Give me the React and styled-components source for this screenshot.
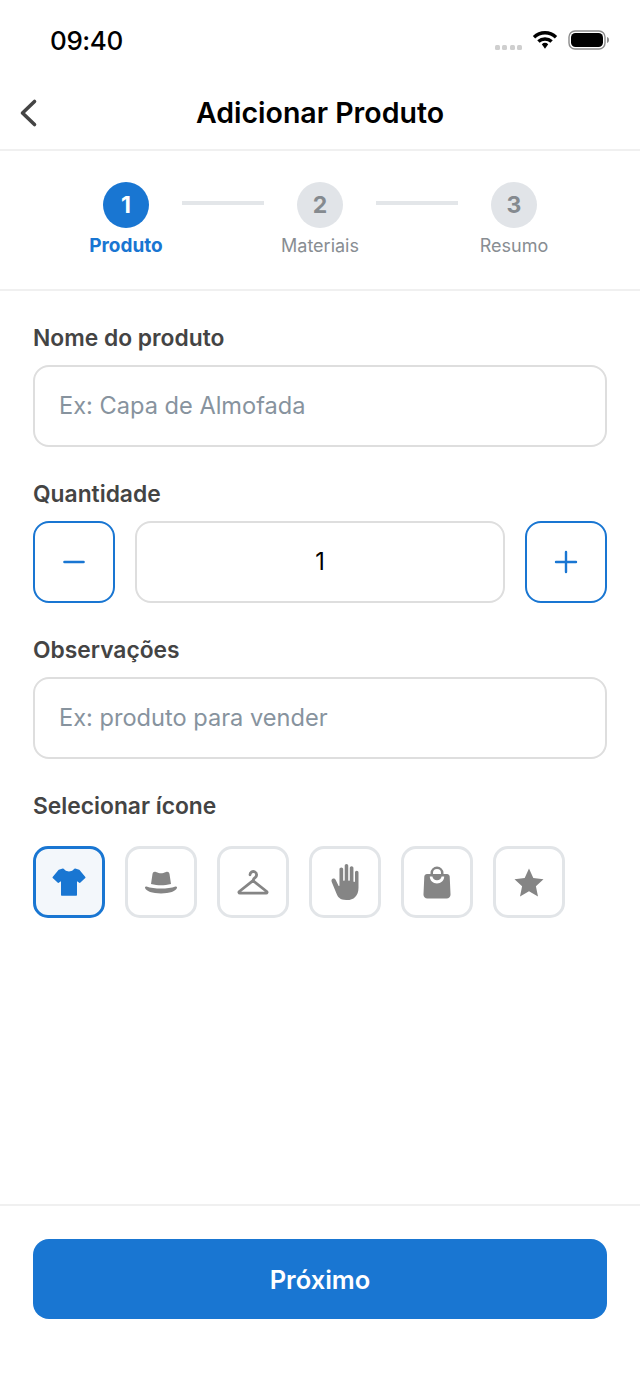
import React from "react";
import styled, { createGlobalStyle } from "styled-components";
import { IoHandRight } from "react-icons/io5";

const Global = createGlobalStyle`
  * { box-sizing: border-box; }
  html, body { margin: 0; padding: 0; background: #fff; }
  body { font-family: Inter, "Noto Sans", sans-serif; }
`;

const Page = styled.div`
  width: 640px;
  height: 1385px;
  background: #fff;
  display: flex;
  flex-direction: column;
  overflow: hidden;
`;

const StatusBar = styled.div`
  height: 76px;
  flex: none;
  padding: 23px 30px 0 50px;
  display: flex;
  justify-content: space-between;
  align-items: flex-start;
`;

const Time = styled.span`
  font-size: 26px;
  line-height: 36px;
  font-weight: 500;
  letter-spacing: -0.4px;
  color: #000;
`;

const StatusIcons = styled.div`
  display: flex;
  align-items: center;
  gap: 10px;
  padding-top: 7px;
`;

const Dots = styled.div`
  display: flex;
  gap: 2.5px;
  padding-top: 15px;
`;

const Dot = styled.i`
  display: block;
  width: 5px;
  height: 5px;
  border-radius: 1.5px;
  background: #cfcfcf;
`;

const Header = styled.header`
  height: 75px;
  flex: none;
  display: flex;
  align-items: center;
  justify-content: center;
  position: relative;
  border-bottom: 2px solid #f0f0f0;
`;

const BackButton = styled.button`
  position: absolute;
  left: 16px;
  top: 20px;
  width: 26px;
  height: 34px;
  padding: 0;
  border: 0;
  background: none;
  display: flex;
  align-items: center;
  justify-content: center;
`;

const Title = styled.h1`
  margin: 0;
  font-size: 28.5px;
  line-height: 36px;
  font-weight: 600;
  color: #000;
`;

const Stepper = styled.nav`
  height: 140px;
  flex: none;
  padding-top: 31px;
  display: flex;
  justify-content: center;
  align-items: flex-start;
  border-bottom: 2px solid #f0f0f0;
`;

const Step = styled.div`
  width: 88px;
  display: flex;
  flex-direction: column;
  align-items: center;
  gap: 6px;
`;

const StepCircle = styled.div`
  width: 46px;
  height: 46px;
  border-radius: 50%;
  background: ${(p) => (p.$active ? "#1976d2" : "#e1e4e8")};
  color: ${(p) => (p.$active ? "#fff" : "#858a8f")};
  font-size: 23px;
  font-weight: 700;
  display: flex;
  align-items: center;
  justify-content: center;
`;

const StepLabel = styled.span`
  font-size: ${(p) => (p.$active ? "19px" : "18px")};
  line-height: 24px;
  white-space: nowrap;
  font-weight: ${(p) => (p.$active ? 700 : 400)};
  color: ${(p) => (p.$active ? "#1976d2" : "#888d92")};
`;

const StepLine = styled.div`
  width: 82px;
  height: 4px;
  margin: 19px 12px 0;
  background: #e3e6e9;
`;

const Form = styled.main`
  flex: 1;
  padding: 33px 33px 0;
  display: flex;
  flex-direction: column;
  gap: 33.5px;
`;

const Field = styled.section`
  display: flex;
  flex-direction: column;
  gap: 13px;
`;

const Label = styled.label`
  font-size: 22.8px;
  line-height: 28px;
  font-weight: 600;
  color: #444;
`;

const TextInput = styled.input`
  width: 100%;
  height: 81.5px;
  border: 2px solid #dedede;
  border-radius: 16px;
  padding: 0 24px;
  background: #fff;
  font-family: inherit;
  font-size: 23.6px;
  color: #000;
  outline: none;
  &::placeholder { color: #87939e; opacity: 1; }
`;

const QuantityRow = styled.div`
  display: flex;
  gap: 20px;
`;

const StepButton = styled.button`
  width: 82px;
  height: 81.5px;
  flex: none;
  padding: 0;
  border: 2px solid #1976d2;
  border-radius: 16px;
  background: #fff;
  display: flex;
  align-items: center;
  justify-content: center;
`;

const QuantityValue = styled(TextInput)`
  flex: 1;
  min-width: 0;
  text-align: center;
  padding: 0;
`;

const IconGrid = styled.div`
  display: flex;
  gap: 20px;
  margin-top: 13px;
`;

const IconChoice = styled.button`
  width: 72px;
  height: 72px;
  padding: 0;
  border: 3px solid ${(p) => (p.$active ? "#1976d2" : "#e2e5e8")};
  border-radius: 15px;
  background: ${(p) => (p.$active ? "#f3f7fb" : "#fff")};
  color: ${(p) => (p.$active ? "#1976d2" : "#858585")};
  display: flex;
  align-items: center;
  justify-content: center;
`;

const Footer = styled.footer`
  flex: none;
  height: 181px;
  padding: 33px 33px 0;
  border-top: 2px solid #f0f0f0;
`;

const NextButton = styled.button`
  width: 100%;
  height: 80px;
  border: 0;
  border-radius: 16px;
  background: #1976d2;
  color: #fff;
  font-family: inherit;
  font-size: 25.5px;
  font-weight: 600;
`;

const Wifi = () => (
  <svg width="26" height="20" viewBox="0 0 26 20" fill="none" stroke="#000" strokeWidth="3.4">
    <path d="M2 7.2a16 16 0 0 1 22 0" />
    <path d="M6.4 11.6a9.6 9.6 0 0 1 13.2 0" />
    <path d="M9.8 14.2l3.2 4.6 3.2-4.6a5 5 0 0 0-6.4 0z" fill="#000" stroke="none" />
  </svg>
);

const Battery = () => (
  <svg width="42" height="20" viewBox="0 0 42 20">
    <rect x="1" y="1" width="36" height="18" rx="6" fill="none" stroke="#8c8c8c" strokeWidth="1.4" />
    <rect x="3" y="3" width="32" height="14" rx="4.5" fill="#000" />
    <path d="M39 7c1.5.4 2 1.6 2 3s-.5 2.6-2 3z" fill="#8c8c8c" />
  </svg>
);

const Chevron = () => (
  <svg width="20" height="30" viewBox="0 0 20 30" fill="none" stroke="#444" strokeWidth="3.6" strokeLinecap="round" strokeLinejoin="round">
    <path d="M15.5 3.5L3.5 15l12 11.5" />
  </svg>
);

const Minus = () => (
  <svg width="24" height="24" viewBox="0 0 24 24" stroke="#1976d2" strokeWidth="2.6" strokeLinecap="round">
    <path d="M2.5 12h19" />
  </svg>
);

const Plus = () => (
  <svg width="24" height="24" viewBox="0 0 24 24" stroke="#1976d2" strokeWidth="2.4" strokeLinecap="round">
    <path d="M2 12h20M12 2v20" />
  </svg>
);

const Shirt = () => (
  <svg width="34" height="30" viewBox="0 0 34 30" fill="currentColor" stroke="currentColor" strokeWidth="1.4" strokeLinejoin="round">
    <path d="M11 2.2c1.2 1.7 3 2.9 6 2.900s4.800-1.200 6-2.900l4 1.300 5.800 7L27.700 15.300l-3.400-2.400v15.200H9.700V12.900l-3.400 2.400-5.100-4.800 5.800-7z" />
  </svg>
);

const Hat = () => (
  <svg width="32" height="23" viewBox="0 0 32 23" fill="currentColor">
    <path d="M6 13 7.500 3C7.800.8 9.500.3 11 1c2 1 3.500 1.200 5 1.200s3-.2 5-1.200c1.500-.7 3.200-.2 3.500 2L26 13c-3.500 1-7 1.300-10 1.300S9.500 14 6 13z" />
    <path d="M1.500 15.500c4 1.500 9 2 14.500 2s10.500-.5 14.500-2c1-.3 1.700.4 1.500 1.300-.8 3.500-7.500 5.700-16 5.700S.8 20.300 0 16.800c-.2-.9.5-1.600 1.500-1.300z" />
  </svg>
);

const Hanger = () => (
  <svg width="32" height="25" viewBox="0 0 32 25" fill="none" stroke="currentColor" strokeWidth="2.8" strokeLinecap="round" strokeLinejoin="round">
    <path d="M13 4.800a3.300 3.300 0 1 1 5.200 2.700c-1.200.8-2.200 1.500-2.200 3.200" />
    <path d="M16 10.700 2.300 21.500c-.7.600-.4 1.700.6 1.700h26.200c1 0 1.300-1.100.6-1.700z" />
  </svg>
);

const Bag = () => (
  <svg width="28" height="33" viewBox="0 0 28 33" fill="currentColor">
    <path d="M7.500 9V7a6.500 6.500 0 0 1 13 0v2h-2.500V7a4 4 0 0 0-8 0v2z" />
    <path fillRule="evenodd" d="M4 8h20c1.500 0 2.500 1 2.700 2.500L27.500 28a4 4 0 0 1-4 4.500h-19a4 4 0 0 1-4-4.500l.8-17.500C1.500 9 2.500 8 4 8zM6.800 10.500c0 4 3.200 7 7.200 7s7.200-3 7.200-7h-2.600c-.4 2.200-2.200 3.800-4.600 3.800s-4.200-1.600-4.600-3.800z" />
  </svg>
);

const Star = () => (
  <svg width="30" height="29" viewBox="0 0 30 29" fill="currentColor">
    <path d="M15 .5l4.300 9.600 10.200 1.100-7.600 7 2.100 10.300L15 23.300l-9 5.200 2.100-10.300-7.600-7 10.200-1.100z" />
  </svg>
);

const steps = [
  { n: 1, label: "Produto", active: true },
  { n: 2, label: "Materiais" },
  { n: 3, label: "Resumo" },
];

const choices = [
  { key: "shirt", icon: <Shirt />, active: true },
  { key: "hat", icon: <Hat /> },
  { key: "hanger", icon: <Hanger /> },
  { key: "hand", icon: <IoHandRight size={36} /> },
  { key: "bag", icon: <Bag /> },
  { key: "star", icon: <Star /> },
];

export default function App() {
  return (
    <Page>
      <Global />
      <StatusBar>
        <Time>09:40</Time>
        <StatusIcons>
          <Dots>
            <Dot /><Dot /><Dot /><Dot />
          </Dots>
          <Wifi />
          <Battery />
        </StatusIcons>
      </StatusBar>
      <Header>
        <BackButton aria-label="Voltar"><Chevron /></BackButton>
        <Title>Adicionar Produto</Title>
      </Header>
      <Stepper>
        {steps.map((s, i) => (
          <React.Fragment key={s.n}>
            {i > 0 && <StepLine />}
            <Step>
              <StepCircle $active={s.active}>{s.n}</StepCircle>
              <StepLabel $active={s.active}>{s.label}</StepLabel>
            </Step>
          </React.Fragment>
        ))}
      </Stepper>
      <Form>
        <Field>
          <Label>Nome do produto</Label>
          <TextInput placeholder="Ex: Capa de Almofada" />
        </Field>
        <Field>
          <Label>Quantidade</Label>
          <QuantityRow>
            <StepButton aria-label="Diminuir"><Minus /></StepButton>
            <QuantityValue defaultValue="1" />
            <StepButton aria-label="Aumentar"><Plus /></StepButton>
          </QuantityRow>
        </Field>
        <Field>
          <Label>Observações</Label>
          <TextInput placeholder="Ex: produto para vender" />
        </Field>
        <Field>
          <Label>Selecionar ícone</Label>
          <IconGrid>
            {choices.map((c) => (
              <IconChoice key={c.key} $active={c.active}>{c.icon}</IconChoice>
            ))}
          </IconGrid>
        </Field>
      </Form>
      <Footer>
        <NextButton>Próximo</NextButton>
      </Footer>
    </Page>
  );
}
